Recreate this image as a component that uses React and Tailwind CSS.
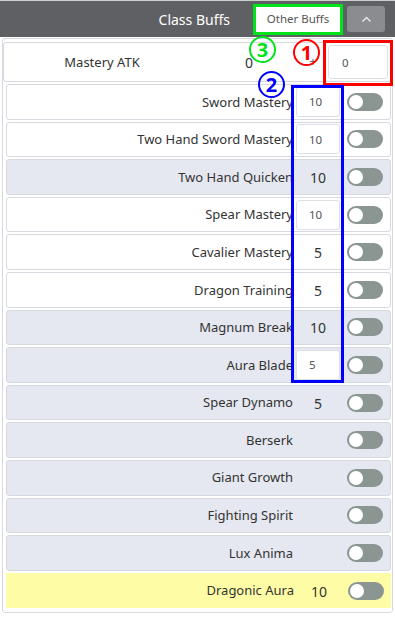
import React from "react";

const skills = [
  { name: "Sword Mastery", value: "10", input: true, bg: "bg-white" },
  { name: "Two Hand Sword Mastery", value: "10", input: true, bg: "bg-white" },
  { name: "Two Hand Quicken", value: "10", bg: "bg-[#e5e8f0]" },
  { name: "Spear Mastery", value: "10", input: true, bg: "bg-white" },
  { name: "Cavalier Mastery", value: "5", bg: "bg-white" },
  { name: "Dragon Training", value: "5", bg: "bg-white" },
  { name: "Magnum Break", value: "10", bg: "bg-[#e5e8f0]" },
  { name: "Aura Blade", value: "5", input: true, bg: "bg-[#e5e8f0]" },
  { name: "Spear Dynamo", value: "5", bg: "bg-[#e5e8f0]" },
  { name: "Berserk", value: "", bg: "bg-[#e5e8f0]" },
  { name: "Giant Growth", value: "", bg: "bg-[#e5e8f0]" },
  { name: "Fighting Spirit", value: "", bg: "bg-[#e5e8f0]" },
  { name: "Lux Anima", value: "", bg: "bg-[#e5e8f0]" },
  { name: "Dragonic Aura", value: "10", bg: "bg-[#fffca6]", yellow: true },
];

function Toggle() {
  return (
    <div className="flex h-[18px] w-[36px] shrink-0 items-center rounded-full bg-[#8b9693]">
      <div className="ml-[2px] h-[14px] w-[14px] rounded-full bg-white" />
    </div>
  );
}

function SkillRow({ skill }) {
  return (
    <div
      className={`flex h-[35.6px] items-center ${skill.bg} ${
        skill.yellow ? "" : "rounded-[3px] border border-[#d6d9df]"
      }`}
    >
      <div className="flex-1 overflow-hidden whitespace-nowrap pt-[1px] text-right text-[13px] text-[#333]">
        {skill.name}
      </div>
      <div className="flex w-[50px] shrink-0 items-center justify-center">
        {skill.input ? (
          <input
            readOnly
            value={skill.value}
            className="h-[30px] w-[44px] rounded-[3px] border border-[#dcdfe4] bg-white px-[12px] text-[11.5px] text-[#555] outline-none"
          />
        ) : (
          <span className="pt-[1px] text-[14px] text-[#333]">{skill.value}</span>
        )}
      </div>
      <div className="ml-[4px] mr-[7px]">
        <Toggle />
      </div>
    </div>
  );
}

function Circled({ n, color, className }) {
  return (
    <div
      className={`absolute flex h-[27px] w-[27px] items-center justify-center rounded-full border-2 text-[20px] font-bold leading-none ${color} ${className}`}
    >
      {n}
    </div>
  );
}

export default function App() {
  return (
    <div
      className="relative h-[618px] w-[395px] overflow-hidden bg-white"
      style={{ fontFamily: '"Noto Sans", "Open Sans", sans-serif' }}
    >
      <div className="flex h-[37px] items-center justify-end border-t border-[#cfcfcf] bg-[#5f6064]">
        <span className="mr-[23px] text-[14px] text-white">Class Buffs</span>
        <div className="flex h-[31px] w-[90px] items-center justify-center border-[3px] border-[#00e31b] bg-white text-[11.5px] text-[#555]">
          Other Buffs
        </div>
        <div className="ml-[4px] mr-[10px] flex h-[26px] w-[38px] items-center justify-center rounded-[3px] bg-[#8b8c90]">
          <svg width="11" height="7" viewBox="0 0 11 7" fill="none">
            <path d="M1.5 5.5 L5.5 1.5 L9.5 5.5" stroke="#e9e9ea" strokeWidth="1.4" />
          </svg>
        </div>
      </div>

      <div className="mx-[2px] mt-[1px] rounded-[3px] border border-[#d6d9df] pt-[3px] pb-[4px]">
        <div className="flex h-[40px] items-center rounded-[3px] border border-[#d6d9df] bg-white">
          <div className="w-[196px] pt-[1px] text-center text-[13px] text-[#333]">Mastery ATK</div>
          <div className="w-[98px] pt-[1px] text-center text-[14px] text-[#333]">0</div>
          <div className="w-[30px] text-center text-[13px] text-[#666]">+</div>
          <input
            readOnly
            value="0"
            className="h-[34px] w-[60px] rounded-[3px] border border-[#dcdfe4] bg-white px-[13px] text-[11.5px] text-[#555] outline-none"
          />
        </div>
        <div className="ml-[3px] mr-[1px] mt-[2px] flex flex-col gap-[2px]">
          {skills.map((s) => (
            <SkillRow key={s.name} skill={s} />
          ))}
        </div>
      </div>

      <div className="absolute left-[323px] top-[40px] h-[46px] w-[70px] border-[3px] border-[#ff0000]" />
      <div className="absolute left-[291px] top-[85px] h-[298px] w-[53px] border-[3px] border-[#0000ff]" />
      <Circled n="3" color="border-[#00e31b] text-[#00e31b]" className="left-[249px] top-[36px]" />
      <Circled n="1" color="border-[#ff0000] text-[#ff0000]" className="left-[293px] top-[39px]" />
      <Circled n="2" color="border-[#0000ff] text-[#0000ff]" className="left-[258px] top-[71px]" />
    </div>
  );
}
